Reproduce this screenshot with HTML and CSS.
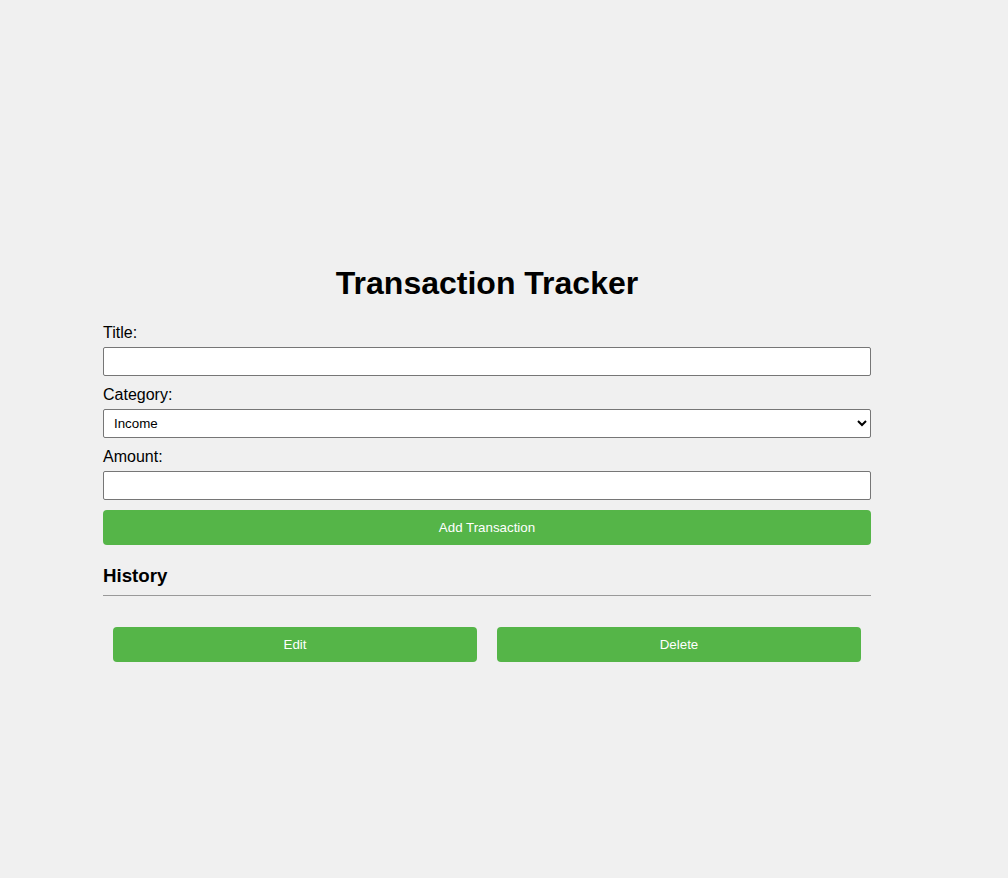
FILE: index.html
```html
<!DOCTYPE html>
<html lang="en">
<head>
<meta charset="utf-8">
<title>Transaction Tracker</title>
<link rel="stylesheet" href="styles.css">
</head>
<body>
<div class="container">
  <h1 class="title">Transaction Tracker</h1>
  <form class="form">
    <label class="label" for="title">Title:</label>
    <input class="field" id="title" type="text">
    <label class="label" for="category">Category:</label>
    <select class="field select" id="category">
      <option>Income</option>
      <option>Expense</option>
    </select>
    <label class="label" for="amount">Amount:</label>
    <input class="field" id="amount" type="number">
    <button class="btn btn-add" type="button">Add Transaction</button>
  </form>
  <h3 class="history-title">History</h3>
  <div class="history-row">
    <button class="btn btn-row" type="button">Edit</button>
    <button class="btn btn-row" type="button">Delete</button>
  </div>
</div>
</body>
</html>
```

FILE: styles.css
```css
html, body {
  margin: 0;
  padding: 0;
}
body {
  background: #f0f0f0;
  font-family: "Liberation Sans", Arial, sans-serif;
  color: #000;
}
.container {
  width: 768px;
  margin-left: 103px;
  padding-top: 244px;
}
.title {
  font-size: 32px;
  font-weight: bold;
  text-align: center;
  margin: 21.44px 0;
}
.form {
  display: flex;
  flex-direction: column;
}
.label {
  display: block;
  font-size: 16px;
  margin-bottom: 5px;
}
.field {
  box-sizing: border-box;
  width: 100%;
  height: 29px;
  padding: 6px;
  margin: 0 0 10px 0;
  border: 1px solid #767676;
  border-radius: 2px;
  background: #fff;
  font-family: "Liberation Sans", Arial, sans-serif;
  font-size: 13.33px;
  color: #000;
}
.select {
  padding: 0 6px;
}
.btn {
  box-sizing: border-box;
  height: 35px;
  border: none;
  border-radius: 4px;
  background: #55b548;
  color: #fff;
  font-family: "Liberation Sans", Arial, sans-serif;
  font-size: 13.33px;
  padding: 10px;
  cursor: pointer;
}
.btn-add {
  width: 100%;
}
.history-title {
  font-size: 18.72px;
  font-weight: bold;
  margin: 20px 0 0 0;
  padding-bottom: 8px;
  border-bottom: 1px solid #999;
}
.history-row {
  display: flex;
  gap: 20px;
  padding: 10px;
  margin-top: 21px;
}
.btn-row {
  flex: 1;
}
```
